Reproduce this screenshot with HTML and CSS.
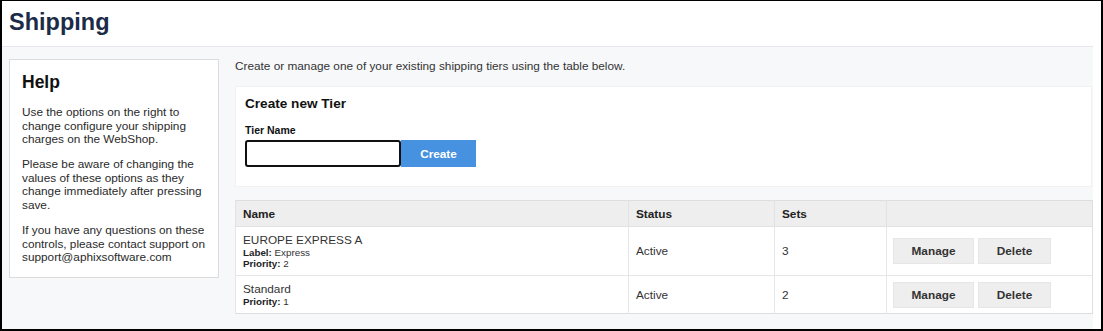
FILE: index.html
```html
<!DOCTYPE html>
<html>
<head>
<meta charset="utf-8">
<link rel="stylesheet" href="styles.css">
</head>
<body>
<div class="frame">
  <header class="top">
    <h1 class="title">Shipping</h1>
  </header>
  <section class="page">
    <aside class="help">
      <h2 class="help-title">Help</h2>
      <p>Use the options on the right to change configure your shipping charges on the WebShop.</p>
      <p>Please be aware of changing the values of these options as they change immediately after pressing save.</p>
      <p>If you have any questions on these controls, please contact support on support@aphixsoftware.com</p>
    </aside>
    <main class="main">
      <p class="intro">Create or manage one of your existing shipping tiers using the table below.</p>
      <div class="card">
        <h3 class="card-title">Create new Tier</h3>
        <label class="field-label">Tier Name</label>
        <div class="field-row">
          <input class="field-input" type="text">
          <button class="btn-create">Create</button>
        </div>
      </div>
      <table class="tiers">
        <colgroup>
          <col class="c-name"><col class="c-status"><col class="c-sets"><col class="c-actions">
        </colgroup>
        <thead>
          <tr><th>Name</th><th>Status</th><th>Sets</th><th></th></tr>
        </thead>
        <tbody>
          <tr>
            <td>
              <div class="tier-name">EUROPE EXPRESS A</div>
              <div class="meta"><b>Label:</b> Express</div>
              <div class="meta"><b>Priority:</b> 2</div>
            </td>
            <td>Active</td>
            <td>3</td>
            <td class="actions"><button class="btn btn-manage">Manage</button><button class="btn btn-delete">Delete</button></td>
          </tr>
          <tr>
            <td>
              <div class="tier-name">Standard</div>
              <div class="meta"><b>Priority:</b> 1</div>
            </td>
            <td>Active</td>
            <td>2</td>
            <td class="actions"><button class="btn btn-manage">Manage</button><button class="btn btn-delete">Delete</button></td>
          </tr>
        </tbody>
      </table>
    </main>
  </section>
</div>
</body>
</html>
```
FILE: styles.css
```css
* { box-sizing: border-box; }
html, body { margin: 0; padding: 0; background: #fff; }
body { font-family: "Liberation Sans", Arial, sans-serif; color: #222; font-size: 11.8px; }

.frame {
  width: 1103px;
  height: 331px;
  border-style: solid;
  border-color: #000;
  border-width: 1px 2px 2px 2px;
  display: flex;
  flex-direction: column;
  overflow: hidden;
}

.top { height: 45px; padding: 8px 0 0 7px; }
.title {
  margin: 0;
  font-size: 23.5px;
  line-height: 26px;
  font-weight: bold;
  color: #1c2b48;
}

.page {
  flex: 1;
  margin-right: 8px;
  background: #f7f8fa;
  border-top: 1px solid #e6e7ea;
  display: grid;
  grid-template-columns: 210px 857px;
  column-gap: 16px;
  align-items: start;
  padding: 12px 0 0 7px;
}

.help {
  background: #fff;
  border: 1px solid #dcdcdc;
  padding: 12px 12px 12px 12px;
}
.help-title {
  margin: 0 0 13px 0;
  font-size: 17.5px;
  line-height: 21px;
  font-weight: bold;
  color: #111;
}
.help p {
  margin: 0 0 11.5px 0;
  line-height: 13.6px;
  color: #2a2a2a;
}
.help p:last-child { margin-bottom: 0; }

.intro { margin: 0 0 13px 0; line-height: 14px; color: #333; }

.card {
  background: #fff;
  border: 1px solid #f1f1f1;
  padding: 9px 9px 19px 9px;
}
.card-title {
  margin: 0 0 12px 0;
  font-size: 13.6px;
  line-height: 16px;
  font-weight: bold;
  color: #111;
}
.field-label {
  display: block;
  font-size: 10.5px;
  font-weight: bold;
  line-height: 13px;
  margin-bottom: 3px;
  color: #111;
}
.field-row { display: flex; }
.field-input {
  width: 156px;
  height: 27px;
  border: 2px solid #111;
  border-radius: 3px;
  background: #fff;
  margin: 0;
  padding: 0 4px;
}
.btn-create {
  width: 75px;
  height: 27px;
  margin: 0;
  border: none;
  background: #4691e0;
  color: #fff;
  font-family: "Liberation Sans", Arial, sans-serif;
  font-weight: bold;
  font-size: 11.8px;
}

.tiers {
  margin-top: 13px;
  width: 857px;
  border-collapse: collapse;
  table-layout: fixed;
  background: #fff;
  border: 1px solid #dedede;
}
.c-name { width: 393px; }
.c-status { width: 146px; }
.c-sets { width: 112px; }
.c-actions { width: 206px; }
.tiers th {
  background: #eeeeee;
  height: 26px;
  padding: 0 7px;
  text-align: left;
  font-weight: bold;
  color: #222;
  border-left: 1px solid #e2e2e2;
  border-bottom: 1px solid #e2e2e2;
}
.tiers td {
  padding: 6px 7px 5px 7px;
  border-left: 1px solid #e6e6e6;
  border-top: 1px solid #e6e6e6;
  vertical-align: middle;
  color: #333;
  line-height: 14px;
}
.tier-name { line-height: 14px; }
.meta { font-size: 9.8px; line-height: 11.3px; color: #333; }
.meta b { color: #222; }
.actions { white-space: nowrap; }
.tiers td.actions { padding-left: 6px; }
.btn {
  height: 26px;
  margin: 0 4px 0 0;
  padding: 0;
  border: 1px solid #e6e6e6;
  background: #eeeeee;
  color: #333;
  font-family: "Liberation Sans", Arial, sans-serif;
  font-weight: bold;
  font-size: 11.8px;
  vertical-align: middle;
}
.btn-manage { width: 81px; }
.btn-delete { width: 73px; }
```
